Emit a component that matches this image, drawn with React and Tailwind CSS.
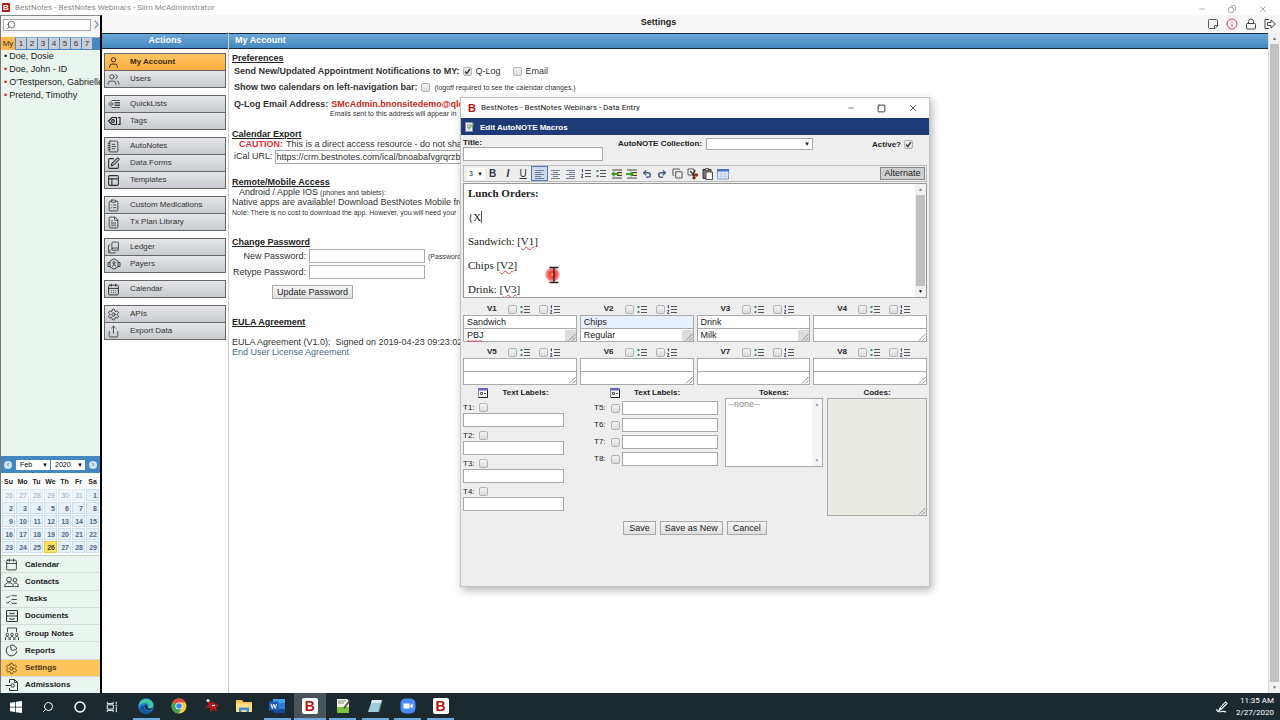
import React from 'react';
import {
  User, Users, Calendar, CalendarDays, Settings, ChartPie, Share, ClipboardList, FileText,
  SquarePen, PanelsTopLeft, NotebookText, BookCopy, ListChecks,
  StickyNote, CircleAlert, Lock, Search, Circle, Minus, Square, Copy, X, Undo2, Redo2,
} from 'lucide-react';

/* ---------- small drawings ---------- */

function BrandIcon({ className }) {
  return (
    <span className={'flex shrink-0 items-center justify-center font-["Liberation_Sans",sans-serif] font-bold ' + className}>B</span>
  );
}

function QuickTagIcon() {
  return (
    <svg viewBox="0 0 14 12" className="h-3 w-3.5" fill="none" stroke="#444" strokeWidth="0.9">
      <path d="M13 2.5H5L1.5 6 5 9.5h8M7.5 4.5H13M7.5 6H13M7.5 7.5H13" />
      <circle cx="5" cy="6" r="1" />
    </svg>
  );
}

function TagIcon() {
  return (
    <svg viewBox="0 0 14 12" className="h-3 w-3.5" fill="none" stroke="#222" strokeWidth="1.1">
      <path d="M9.5 2.5H5L1.5 6 5 9.5h4.5zM11 2.5h2v7h-2" />
      <circle cx="6" cy="6" r="1.4" />
    </svg>
  );
}

function PayerIcon() {
  return (
    <svg viewBox="0 0 14 12" className="h-3 w-3.5" fill="none" stroke="#333" strokeWidth="0.9">
      <path d="M7 .8 11 3v6l-4 2.200L3 9V3zM3 4.500H1v4h2M11 4.500h2v4h-2M5.500 8.500c0-2.400 3-2.400 3 0" />
      <circle cx="7" cy="4.800" r="1.200" />
    </svg>
  );
}

function ContactsIcon() {
  return (
    <svg viewBox="0 0 15 12" className="h-3 w-[15px]" fill="none" stroke="#333" strokeWidth="0.9">
      <circle cx="5" cy="3.500" r="2.300" />
      <circle cx="11" cy="4" r="1.900" />
      <path d="M.5 10.500c0-5 9-5 9 0zM10.500 10.500h4c0-3-2.500-4-4.800-3" />
    </svg>
  );
}

function DocumentsIcon() {
  return (
    <svg viewBox="0 0 14 14" className="h-3.5 w-3.5" fill="none" stroke="#333" strokeWidth="1">
      <path d="M1.500 1.500h11v11h-11zM1.500 7h11M5 3.500v1.200h4V3.500M5 9v1.200h4V9" />
    </svg>
  );
}

function AdmissionsIcon() {
  return (
    <svg viewBox="0 0 14 14" className="h-3.5 w-3.5" fill="none" stroke="#333" strokeWidth="1">
      <path d="M4.500 5V1.500h5l3 3v8h-8V10M9.500 1.500v3h3M.5 7.500H6M6 7.500a1.700 1.700 0 1 0 3.400 0 1.700 1.700 0 1 0-3.400 0" />
    </svg>
  );
}

function GroupIcon() {
  return (
    <svg viewBox="0 0 14 14" className="h-3.5 w-3.5" fill="none" stroke="#333" strokeWidth="0.9">
      <path d="M2.500 5V1h9v4M.5 13v-2c0-2 3.600-2 3.600 0v2M5.200 13v-2c0-2 3.600-2 3.600 0v2M9.900 13v-2c0-2 3.600-2 3.600 0v2" />
      <circle cx="2.300" cy="7.500" r="1.300" />
      <circle cx="7" cy="7.500" r="1.300" />
      <circle cx="11.700" cy="7.500" r="1.300" />
    </svg>
  );
}

function ListIcon({ numbered }) {
  return (
    <svg viewBox="0 0 10 9" className="h-[9px] w-2.5" fill="none" stroke="#555" strokeWidth="1">
      <path d="M4 1.500h6M4 4.500h6M4 7.500h6" strokeWidth="1.200" />
      {numbered
        ? <path d="M.5 1.500 1.500.5v3M.3 5.500h1.500L.5 8.500h1.800" stroke="#2a3a7a" strokeWidth="0.900" />
        : <path d="M.5 2h2M.5 7h2" stroke="#3c8a5c" strokeWidth="1.900" />}
    </svg>
  );
}

function LabelIcon() {
  return (
    <svg viewBox="0 0 10 10" className="h-2.5 w-2.5">
      <rect x="0.500" y="0.500" width="9" height="9" fill="#f4f4f4" stroke="#888" />
      <rect x="0" y="0" width="10" height="2.500" fill="#6a68c0" />
      <path d="M9.500 2v7.500H1" fill="none" stroke="#222" />
      <path d="M2.500 4.500h2v2h-2zM6 5.500h2" fill="none" stroke="#445" strokeWidth="0.900" />
    </svg>
  );
}

function Grip() {
  return (
    <svg viewBox="0 0 8 8" className="h-2 w-2" fill="none" stroke="#888" strokeWidth="0.900">
      <path d="M1 7.500 7.500 1M4.500 7.500l3-3" />
    </svg>
  );
}

function AlignIcon({ kind }) {
  const d = {
    left: 'M1 2.500h9M1 4.500h6M1 6.500h9M1 8.500h6M1 10.500h9',
    center: 'M1 2.500h9M3 4.500h5M1 6.500h9M3 8.500h5M1 10.500h9',
    right: 'M1 2.500h9M4 4.500h6M1 6.500h9M4 8.500h6M1 10.500h9',
  }[kind];
  return (
    <svg viewBox="0 0 11 12" className="h-3 w-[11px]" fill="none" stroke="#6a7486" strokeWidth="0.9"><path d={d} /></svg>
  );
}

function IndentIcon({ out }) {
  return (
    <svg viewBox="0 0 12 12" className="h-3 w-3" fill="none">
      <path d="M1 2h10M6 4.500h5M6 7.500h5M1 10h10" stroke="#444" strokeWidth="1" />
      <path d={out ? 'M0 6l3.500-3v2H8v2H3.500v2z' : 'M8 6 4.500 3v2H0v2h4.500v2z'} fill="#35a02c" />
      <path d="M7 6h4" stroke="#e7c33a" strokeWidth="1.200" />
    </svg>
  );
}

/* ---------- form parts ---------- */

function Check({ label, checked }) {
  return (
    <span className="relative flex h-[9px] w-[9px] shrink-0">
      <input
        type="checkbox"
        aria-label={label}
        defaultChecked={checked}
        className="h-[9px] w-[9px] appearance-none rounded-[2px] border border-[#b4b4b4] bg-linear-to-b from-[#f2f2f2] to-[#dcdcdc]"
      />
      {checked && (
        <svg viewBox="0 0 9 9" className="pointer-events-none absolute inset-0 h-[9px] w-[9px]" fill="none" stroke="#444" strokeWidth="1.500">
          <path d="M2 4.500 3.800 6.500 7 2" />
        </svg>
      )}
    </span>
  );
}

const fieldClass = 'border border-[#a9a9a9] px-[3px] text-[9px] leading-none outline-none';
const buttonClass = 'h-3.5 border border-[#a8a8a8] bg-linear-to-b from-[#f6f6f6] to-[#dfdfdf] text-[9px] leading-none text-[#222]';

/* ---------- left sidebar ---------- */

const clients = [
  ['Doe, Dosie', 'text-[#222]'],
  ['Doe, John - ID', 'text-[#d22]'],
  ["O'Testperson, Gabrielle", 'text-[#d22]'],
  ['Pretend, Timothy', 'text-[#d22]'],
];

const weeks = [
  [26, 27, 28, 29, 30, 31, 1],
  [2, 3, 4, 5, 6, 7, 8],
  [9, 10, 11, 12, 13, 14, 15],
  [16, 17, 18, 19, 20, 21, 22],
  [23, 24, 25, 26, 27, 28, 29],
];

const navIcon = 'h-[13px] w-[13px]';
const navItems = [
  ['Calendar', <Calendar className={navIcon} strokeWidth={1.5} />],
  ['Contacts', <ContactsIcon />],
  ['Tasks', <ListChecks className={navIcon} strokeWidth={1.5} />],
  ['Documents', <DocumentsIcon />],
  ['Group Notes', <GroupIcon />],
  ['Reports', <ChartPie className={navIcon + ' -rotate-12'} strokeWidth={1.5} />],
  ['Settings', <Settings className={navIcon} strokeWidth={1.5} />],
  ['Admissions', <AdmissionsIcon />],
];

function MiniSelect({ label, value, className }) {
  return (
    <span className={'relative flex ' + className}>
      <select aria-label={label} className="h-2.5 w-full appearance-none bg-white pl-1 text-[7px] leading-none">
        <option>{value}</option>
      </select>
      <span className="pointer-events-none absolute top-0 right-0.5 text-[6px] leading-[10px]">▼</span>
    </span>
  );
}

function MiniCalendar() {
  return (
    <section aria-label="Calendar" className="bg-white pb-px">
      <div className="flex h-[17px] items-center justify-between bg-[#4388c0] px-[3px]">
        <button aria-label="Previous month" className="flex h-2 w-2 items-center justify-center rounded-full bg-[#cfe3f5] text-[7px] leading-none text-[#2d6ea8]">‹</button>
        <div className="flex gap-px">
          <MiniSelect label="Month" value="Feb" className="w-[34px]" />
          <MiniSelect label="Year" value="2020" className="w-[34px]" />
        </div>
        <button aria-label="Next month" className="flex h-2 w-2 items-center justify-center rounded-full bg-[#cfe3f5] text-[7px] leading-none text-[#2d6ea8]">›</button>
      </div>
      <table className="w-full table-fixed border-separate border-spacing-px text-[7px] font-bold">
        <thead>
          <tr>
            {['Su', 'Mo', 'Tu', 'We', 'Th', 'Fr', 'Sa'].map((d) => (
              <th key={d} className="h-3.5 p-0 text-center leading-none text-[#222]">{d}</th>
            ))}
          </tr>
        </thead>
        <tbody>
          {weeks.map((week, w) => (
            <tr key={w}>
              {week.map((day, i) => {
                const tone = w === 0 && day > 1
                  ? 'bg-[#f0f6fc] text-[#9aacc0] font-normal border-[#e3edf7]'
                  : w === 4 && day === 26
                    ? 'bg-[#ffe45c] text-[#363636] border-[#e8c840]'
                    : 'bg-[#e6f1fa] text-[#4c6a8c] border-[#cbdff0]';
                return (
                  <td key={i} className={'h-3 border p-0 pr-px text-right leading-none ' + tone}>{day}</td>
                );
              })}
            </tr>
          ))}
        </tbody>
      </table>
    </section>
  );
}

function Sidebar() {
  return (
    <aside className="flex w-[102px] shrink-0 flex-col overflow-hidden border-t border-r-2 border-l border-t-[#888] border-r-black border-l-[#777] bg-[#e9f5ee]">
      <div className="flex h-[17px] items-center gap-0.5 bg-[#f4f4f4] pl-0.5">
        <label className="flex h-3 min-w-0 flex-1 items-center border border-[#a9a9a9] bg-white px-0.5">
          <Search className="h-2.5 w-2.5 shrink-0 -scale-x-100 text-[#444]" strokeWidth={1.8} />
          <input aria-label="Search" className="w-full min-w-0 text-[9px] leading-none outline-none" />
        </label>
        <button aria-label="Go" className="flex w-[7px] justify-center">
          <svg viewBox="0 0 5 9" className="h-[9px] w-[5px]" fill="none" stroke="#7d9ccb" strokeWidth="1.400"><path d="m.8.800 3.200 3.700L.8 8.200" /></svg>
        </button>
      </div>
      <div className="flex h-[17px] items-end gap-px bg-linear-to-b from-white from-20% to-[#4388c0] to-30%">
        <button className="h-[13px] w-3.5 bg-[#fcb84e] text-[8px] leading-none text-[#333]">My</button>
        {[1, 2, 3, 4, 5, 6, 7].map((n) => (
          <button key={n} className="mb-px h-[11px] w-2.5 bg-[#c9ced6] text-[8px] leading-none text-[#333]">{n}</button>
        ))}
      </div>
      <ul className="flex-1 text-[9px] text-[#222]">
        {clients.map(([name, dot]) => (
          <li key={name} className="flex h-[13px] items-center gap-0.5 pl-[3px] leading-[13px] whitespace-nowrap">
            <span className={'leading-[13px] ' + dot}>•</span>
            <a href="#client">{name}</a>
          </li>
        ))}
      </ul>
      <MiniCalendar />
      <nav className="flex h-[138px] flex-col divide-y divide-[#d5dfd9] border-t border-[#c5cec8]">
        {navItems.map(([name, icon]) => (
          <a
            key={name}
            href="#nav"
            className={'flex flex-1 items-center gap-1.5 overflow-hidden pt-px pl-[3px] text-[8px] leading-none font-bold ' + (name === 'Settings' ? 'bg-[#fec55f] text-[#4a3208]' : 'text-[#222]')}
          >
            <span className="flex w-[15px] justify-center">{icon}</span>{name}
          </a>
        ))}
      </nav>
    </aside>
  );
}

/* ---------- actions ---------- */

const actIcon = 'h-[13px] w-[13px]';
const actionGroups = [
  [['My Account', <User className={actIcon} strokeWidth={1.800} />], ['Users', <Users className={actIcon} strokeWidth={1.500} />]],
  [['QuickLists', <QuickTagIcon />], ['Tags', <TagIcon />]],
  [['AutoNotes', <NotebookText className={actIcon} strokeWidth={1.500} />], ['Data Forms', <SquarePen className={actIcon} strokeWidth={2} />], ['Templates', <PanelsTopLeft className={actIcon} strokeWidth={2} />]],
  [['Custom Medications', <ClipboardList className={actIcon} strokeWidth={1.500} />], ['Tx Plan Library', <FileText className={actIcon} strokeWidth={1.500} />]],
  [['Ledger', <BookCopy className={actIcon} strokeWidth={1.500} />], ['Payers', <PayerIcon />]],
  [['Calendar', <CalendarDays className={actIcon} strokeWidth={1.800} />]],
  [['APIs', <Settings className={actIcon} strokeWidth={1.800} />], ['Export Data', <Share className={actIcon} strokeWidth={1.500} />]],
];

const barClass = 'flex h-4 shrink-0 items-center border-y border-[#1a2a3a] bg-linear-to-b from-[#69a7d6] to-[#4388c0] text-[9px] font-bold text-white';

function Actions() {
  return (
    <section className="flex w-[127px] shrink-0 flex-col border-r border-[#ccc] bg-white">
      <h2 className={barClass + ' justify-center'}>Actions</h2>
      <nav className="mt-1 flex flex-col gap-[7px] px-0.5">
        {actionGroups.map((group, g) => (
          <div key={g} className="flex flex-col gap-px border border-[#666] bg-[#666]">
            {group.map(([name, icon]) => (
              <a
                key={name}
                href="#action"
                className={'flex h-4 items-center text-[8px] leading-none ' + (name === 'My Account'
                  ? 'bg-linear-to-b from-[#ffc562] to-[#fbae3c] font-bold text-[#3a2808]'
                  : 'bg-linear-to-b from-[#e4e6e8] to-[#c8cbcf] text-[#333]')}
              >
                <span className="flex w-[25px] items-center pl-0.5">{icon}</span>{name}
              </a>
            ))}
          </div>
        ))}
      </nav>
    </section>
  );
}

/* ---------- account page ---------- */

function Heading({ children, className = '' }) {
  return <h3 className={'flex h-3 items-center font-bold text-[#222] underline ' + className}>{children}</h3>;
}

function Account() {
  return (
    <main className="flex min-w-0 flex-1 flex-col overflow-hidden bg-white">
      <h2 className={barClass + ' pl-1.5'}>My Account</h2>
      <div className="mt-[3px] flex flex-col pl-[3px] text-[9px] leading-none whitespace-nowrap text-[#333]">
        <Heading>Preferences</Heading>
        <div className="flex h-3.5 items-center pl-0.5">
          <b>Send New/Updated Appointment Notifications to MY:</b>
          <label className="ml-[3px] flex items-center gap-1"><Check label="Q-Log" checked />Q-Log</label>
          <label className="ml-3 flex items-center gap-1"><Check label="Email" />Email</label>
        </div>
        <div className="mt-px flex h-4 items-center pl-0.5">
          <b>Show two calendars on left-navigation bar:</b>
          <span className="ml-[3px] flex"><Check label="Show two calendars" /></span>
          <span className="ml-[5px] text-[7px]">(logoff required to see the calendar changes.)</span>
        </div>
        <div className="mt-1 flex h-2.5 items-center gap-[3px] pl-0.5">
          <b>Q-Log Email Address:</b><b className="text-[#c92a20]">SMcAdmin.bnonsitedemo@qlog</b>
        </div>
        <p className="flex h-2 items-center pl-[98px] text-[7px]">Emails sent to this address will appear in</p>
        <Heading className="mt-[11px]">Calendar Export</Heading>
        <p className="flex h-2 items-center gap-[3px] pl-[7px]"><b className="text-[#d33]">CAUTION:</b>This is a direct access resource - do not share</p>
        <label className="flex h-4 items-center gap-0.5 pl-0.5">
          iCal URL:
          <input readOnly defaultValue="https://crm.bestnotes.com/ical/bnoabafvgrqrzbn" className={fieldClass + ' mt-0.5 h-3.5 w-[210px] bg-white px-px'} />
        </label>
        <Heading className="mt-3">Remote/Mobile Access</Heading>
        <p className="flex h-2 items-center gap-0.5 pl-[7px]">Android / Apple IOS <span className="text-[7px]">(phones and tablets):</span></p>
        <p className="flex h-3 items-center">Native apps are available! Download BestNotes Mobile from</p>
        <p className="flex h-2 items-center text-[7px]">Note: There is no cost to download the app. However, you will need your</p>
        <Heading className="mt-5">Change Password</Heading>
        <div className="flex h-4 items-center gap-[3px]">
          <label htmlFor="new-pw" className="w-[74px] text-right">New Password:</label>
          <input id="new-pw" type="password" className={fieldClass + ' h-3.5 w-[116px] bg-white'} />
          <span className="text-[7px]">(Password</span>
        </div>
        <div className="flex h-4 items-center gap-[3px]">
          <label htmlFor="re-pw" className="w-[74px] text-right">Retype Password:</label>
          <input id="re-pw" type="password" className={fieldClass + ' h-3.5 w-[116px] bg-white'} />
        </div>
        <button className={buttonClass + ' mt-[5px] ml-10 w-[81px]'}>Update Password</button>
        <Heading className="mt-[17px]">EULA Agreement</Heading>
        <p className="mt-[9px] flex h-2.5 items-center gap-[5px]"><span>EULA Agreement (V1.0):</span><span>Signed on 2019-04-23 09:23:02</span></p>
        <a href="#eula" className="flex h-2.5 items-center text-[#4d6b86]">End User License Agreement</a>
      </div>
    </main>
  );
}

/* ---------- data entry window ---------- */

const toolIcons = [
  ['Bold', <b className="text-[10px] text-[#334]">B</b>],
  ['Italic', <i className="text-[10px] font-bold text-[#334]">I</i>],
  ['Underline', <u className="text-[10px] text-[#334]">U</u>],
  ['Align left', <AlignIcon kind="left" />],
  ['Align center', <AlignIcon kind="center" />],
  ['Align right', <AlignIcon kind="right" />],
  ['Numbered list', <ListIcon numbered />],
  ['Bulleted list', <ListIcon />],
  ['Outdent', <IndentIcon out />],
  ['Indent', <IndentIcon />],
  ['Undo', <Undo2 className="h-2.5 w-2.5 text-[#4a5c8c]" strokeWidth={3.5} />],
  ['Redo', <Redo2 className="h-2.5 w-2.5 text-[#4a5c8c]" strokeWidth={3.5} />],
  ['Copy', <Copy className="h-[11px] w-[11px] text-[#555]" strokeWidth={2.2} />],
  ['Cut', (
    <svg viewBox="0 0 12 12" className="h-3 w-3" fill="none">
      <path d="M1 1h6v6H1z" fill="#fff" stroke="#555" />
      <path d="m3 3 5 5M8 2 6 8" stroke="#333" strokeWidth="1.300" />
      <circle cx="9.500" cy="7" r="1.800" fill="#a33527" />
      <circle cx="7" cy="9.800" r="1.700" fill="#7d2218" />
    </svg>
  )],
  ['Paste', (
    <svg viewBox="0 0 12 12" className="h-3 w-3">
      <path d="M1 1.500h8v9H1z" fill="#777" stroke="#333" />
      <path d="M4 4h6.500v7.500H4z" fill="#fff" stroke="#555" />
      <path d="M3.500.500h3v2h-3z" fill="#ddd" stroke="#222" strokeWidth="0.700" />
    </svg>
  )],
  ['Table', (
    <svg viewBox="0 0 12 12" className="h-3 w-3">
      <path d="M.5 1.500h11v9.500H.5z" fill="#eaf1fd" stroke="#7a96cc" />
      <path d="M0 1h12v2.500H0z" fill="#3f6fc4" />
      <path d="M4.200 3.500v7M8 3.500v7M.5 6h11M.5 8.300h11" stroke="#a9bee4" strokeWidth="0.700" />
    </svg>
  )],
];

const variables = [
  ['V1', 'Sandwich', 'PBJ'], ['V2', 'Chips', 'Regular'], ['V3', 'Drink', 'Milk'], ['V4', '', ''],
  ['V5', '', ''], ['V6', '', ''], ['V7', '', ''], ['V8', '', ''],
];

function Variable({ name, title, value }) {
  return (
    <div>
      <div className="flex h-3 items-center pl-6 text-[8px] font-bold">
        <span className="w-[21px]">{name}</span>
        <Check label={name + ' bulleted'} />
        <span className="ml-[3px]"><ListIcon /></span>
        <span className="ml-[9px] flex"><Check label={name + ' numbered'} /></span>
        <span className="ml-0.5"><ListIcon numbered /></span>
      </div>
      <input aria-label={name + ' title'} defaultValue={title} className={fieldClass + ' block h-3.5 w-full ' + (name === 'V2' ? 'bg-[#e8f0fe]' : 'bg-white')} />
      <div className="relative">
        <textarea aria-label={name + ' value'} defaultValue={value} spellCheck={false} className={fieldClass + ' block h-[13px] w-full resize-none overflow-hidden border-t-0 bg-white py-0.5'} />
        {value === 'PBJ' && (
          <svg viewBox="0 0 16 2" className="pointer-events-none absolute bottom-0 left-1 h-0.5 w-4" fill="none" stroke="#d33" strokeWidth="0.800">
            <path d="m0 1.500 1-1 2 1 2-1 2 1 2-1 2 1 2-1 2 1 1-1" />
          </svg>
        )}
        <span className={'pointer-events-none absolute right-px bottom-px flex h-[11px] w-[11px] items-end justify-end ' + (value ? 'bg-[#dcdcdc]' : '')}><Grip /></span>
      </div>
    </div>
  );
}

function Caption({ children, icon, className = 'justify-center' }) {
  return (
    <div className={'flex h-2.5 items-center text-[8px] leading-none font-bold ' + className}>
      {icon}{children}
    </div>
  );
}

function Misspelt({ children }) {
  return <span className="underline decoration-[#d44] decoration-wavy decoration-[0.5px]">{children}</span>;
}

function DataEntry() {
  return (
    <section aria-label="Data Entry" className="absolute top-[97px] left-[460px] flex h-[490px] w-[470px] flex-col border border-[#c4c4c4] bg-[#eee] text-[#222] shadow-[2px_3px_8px_rgba(0,0,0,0.3)]">
      <header className="flex h-5 shrink-0 items-center bg-white pl-[7px]">
        <BrandIcon className="h-2.5 w-2 text-[11px] text-[#b5150f]" />
        <span className="ml-[5px] flex-1 font-[Roboto,sans-serif] text-[8px] leading-none">BestNotes - BestNotes Webinars - Data Entry</span>
        <div className="flex items-center gap-[22px] pr-[11px] text-[#333]">
          <button aria-label="Minimize"><Minus className="h-2 w-2" strokeWidth={2} /></button>
          <button aria-label="Maximize"><Square className="h-[9px] w-[9px]" strokeWidth={2.5} /></button>
          <button aria-label="Close"><X className="h-2.5 w-2.5" strokeWidth={2} /></button>
        </div>
      </header>
      <h2 className="flex h-[17px] shrink-0 items-center gap-[5px] bg-[#1f3b77] pt-0.5 pl-1 text-[8px] font-bold text-white">
        <svg viewBox="0 0 10 10" className="mb-0.5 h-2.5 w-2.5">
          <path d="M.5.500h7v9h-7z" fill="#eef" stroke="#88a" />
          <path d="M2 3h4M2 5h3" stroke="#669" strokeWidth="0.800" />
          <path d="m3.500 7.500 5-6" stroke="#7ac14b" strokeWidth="1.600" />
        </svg>
        Edit AutoNOTE Macros
      </h2>
      <form className="flex flex-col px-0.5 pt-[3px]" onSubmit={(e) => e.preventDefault()}>
        <div className="flex h-[23px] items-start text-[8px] leading-none font-bold">
          <div className="flex w-[140px] flex-col">
            <label htmlFor="macro-title" className="leading-[9px]">Title:</label>
            <input id="macro-title" className={fieldClass + ' h-3.5 w-full bg-white'} />
          </div>
          <label className="ml-[15px] flex items-center gap-1">
            AutoNOTE Collection:
            <span className="relative flex">
              <select className="h-3 w-[107px] appearance-none border border-[#a9a9a9] bg-white"><option> </option></select>
              <span className="pointer-events-none absolute top-[3px] right-[3px] text-[6px] leading-none">▼</span>
            </span>
          </label>
          <label className="mt-0.5 mr-3.5 ml-auto flex items-center gap-[3px]">Active?<Check label="Active?" checked /></label>
        </div>

        <div className="mt-1 flex h-[17px] items-center border border-[#bbb] pr-px pl-[3px]">
          <span className="relative flex w-[18px]">
            <select aria-label="Font size" className="h-3 w-full appearance-none bg-white pl-0.5 text-[7px] leading-none"><option>3</option></select>
            <span className="pointer-events-none absolute top-[3px] right-0.5 text-[6px] leading-none">▼</span>
          </span>
          <div className="flex w-[246px]">
            {toolIcons.map(([name, icon]) => (
              <button
                key={name}
                type="button"
                aria-label={name}
                className={'flex h-[15px] flex-1 items-center justify-center leading-none ' + (name === 'Align left' ? 'border border-[#5a78ae] bg-[#ccd9ee]' : '')}
              >
                {icon}
              </button>
            ))}
          </div>
          <button type="button" className="ml-auto h-[13px] w-[45px] border border-[#888] bg-[#cfcfcf] text-[9px] leading-none">Alternate</button>
        </div>

        <div className="mt-px flex h-[115px] border border-[#999] bg-white">
          <div
            role="textbox"
            aria-label="Macro text"
            contentEditable
            suppressContentEditableWarning
            spellCheck={false}
            className="h-full flex-1 overflow-hidden pt-[3px] pl-1 font-['Liberation_Serif',serif] text-[11px] leading-3 outline-none"
          >
            <p className="mb-3 font-bold">Lunch Orders:</p>
            <p className="mb-3"><span className="border-r border-[#555]">{'{X'}</span></p>
            <p className="mb-3">Sandwich: [<Misspelt>V1</Misspelt>]</p>
            <p className="mb-3">Chips [<Misspelt>V2</Misspelt>]</p>
            <p>Drink: [<Misspelt>V3</Misspelt>]</p>
          </div>
          <div className="flex w-[11px] flex-col items-center justify-between bg-[#f1f1f1] text-[5px] leading-[11px] text-[#888]">
            <span>▲</span><span className="w-[9px] flex-1 bg-[#c1c1c1]" /><span className="text-black">▼</span>
          </div>
        </div>

        <div className="mt-[5px] grid grid-cols-4 gap-x-[3px] gap-y-1">
          {variables.map(([name, title, value]) => <Variable key={name} name={name} title={title} value={value} />)}
        </div>

        <div className="mt-[3px] flex items-start text-[8px] leading-none">
          <div className="w-[101px]">
            <Caption icon={<span className="mr-3.5"><LabelIcon /></span>}>Text Labels:</Caption>
            <div className="mt-1 flex flex-col gap-[3px]">
              {['T1', 'T2', 'T3', 'T4'].map((t) => (
                <div key={t}>
                  <div className="flex h-[11px] items-center"><label htmlFor={t} className="w-4">{t}:</label><Check label={t + ' enabled'} /></div>
                  <input id={t} className={fieldClass + ' block h-3.5 w-full bg-white'} />
                </div>
              ))}
            </div>
          </div>
          <div className="ml-[30px] w-[124px]">
            <Caption className="pl-4" icon={<span className="mr-3.5"><LabelIcon /></span>}>Text Labels:</Caption>
            <div className="mt-[3px] flex flex-col gap-[3px]">
              {['T5', 'T6', 'T7', 'T8'].map((t) => (
                <div key={t} className="flex items-center">
                  <label htmlFor={t} className="w-[17px]">{t}:</label>
                  <Check label={t + ' enabled'} />
                  <input id={t} className={fieldClass + ' ml-0.5 h-3.5 min-w-0 flex-1 bg-white'} />
                </div>
              ))}
            </div>
          </div>
          <div className="ml-[7px] w-[98px]">
            <Caption>Tokens:</Caption>
            <div className="relative">
              <select aria-label="Tokens" multiple className="block h-[69px] w-full appearance-none overflow-hidden border border-[#a9a9a9] bg-white px-0.5 text-[9px] leading-none text-[#888]">
                <option className="p-0">--none--</option>
              </select>
              <span className="pointer-events-none absolute inset-y-px right-px flex w-2.5 flex-col items-center justify-between bg-[#f6f6f6] text-[5px] leading-[11px] text-[#999]"><span>▲</span><span>▼</span></span>
            </div>
          </div>
          <div className="ml-1 flex-1">
            <Caption>Codes:</Caption>
            <div className="relative">
              <textarea aria-label="Codes" className="block h-[118px] w-full resize-none border border-[#a9a9a9] bg-[#eaeae4] outline-none" />
              <span className="pointer-events-none absolute right-px bottom-px"><Grip /></span>
            </div>
          </div>
        </div>

        <div className="mt-[5px] flex justify-center gap-1">
          <button className={buttonClass + ' px-[5px]'}>Save</button>
          <button className={buttonClass + ' px-1'}>Save as New</button>
          <button className={buttonClass + ' px-[5px]'}>Cancel</button>
        </div>
      </form>
    </section>
  );
}

/* ---------- taskbar ---------- */

const task = 'h-4 w-4';
const launchers = [
  ['Start', <svg viewBox="0 0 16 16" className="h-3 w-3" fill="#fff"><path d="M0 2.200 7 1.200v6.300H0zM8 1l8-1v7.500H8zM0 8.500h7v6.300l-7-1zM8 8.500h8V16l-8-1z" /></svg>],
  ['Search', <Search className="h-3 w-3 -scale-x-100 text-white" strokeWidth={2} />],
  ['Cortana', <Circle className="h-3 w-3 text-white" strokeWidth={3} />],
  ['Task View', <svg viewBox="0 0 14 14" className="h-3 w-3" fill="none" stroke="#fff" strokeWidth="1.100"><path d="M1.500 4.500h7v5h-7zM1.500 1v2h7V1M1.500 13v-2h7v2M12 1v3M12 7v6M10.800 5.500h2.400" /></svg>],
];

function TaskB() {
  return <BrandIcon className="h-4 w-4 rounded-[2px] bg-white text-[14px] text-[#b0140e]" />;
}

const apps = [
  ['Edge', true, (
    <svg viewBox="0 0 16 16" className={task}>
      <circle cx="8" cy="8" r="7.800" fill="#1b7fd0" />
      <path d="M1 6C3 0 12-1 15 5c1.500 4-2 6-5.500 5 2-2 1-5-2-5C4 5 1.500 6.500 1 8z" fill="#45c8a0" />
      <path d="M6 8c-1 3 2 6 7 5-3 3.500-9 3-11-1C2 9 3.500 7 6 8z" fill="#0e559e" />
      <path d="M7 7c2-1 3 1.500 2.500 3 1 1 4 1 5.500-.5-1 2-3 3-5 2.500C7 11.500 6 9 7 7z" fill="#1c2a33" />
    </svg>
  )],
  ['Chrome', false, (
    <svg viewBox="0 0 16 16" className={task}>
      <circle cx="8" cy="8" r="7.500" fill="#f7cc3c" />
      <path d="M8 8 1.500 4.200A7.500 7.500 0 0 1 14.500 4.500H8z" fill="#e04a3a" />
      <path d="M1.500 4.200A7.500 7.500 0 0 0 7.500 15.500L11 9.500 8 8z" fill="#38a352" />
      <circle cx="8" cy="8" r="3.600" fill="#fff" />
      <circle cx="8" cy="8" r="2.800" fill="#4283ec" />
    </svg>
  )],
  ['Utility', false, (
    <svg viewBox="0 0 16 16" className={task}>
      <path d="m3 2 3 2.500L10 4l1 2 4 1-3 2.500 1 4.500-3-2.500L6 14l.5-4L1 9l3.500-2z" fill="#b81a16" />
      <circle cx="4" cy="2.500" r="1.600" fill="#ddd" />
      <path d="M8 7.500h3" stroke="#fff" strokeWidth="1.300" />
    </svg>
  )],
  ['Explorer', false, (
    <svg viewBox="0 0 16 16" className={task}>
      <path d="M0 2h6l1.500 2H16v10H0z" fill="#f4c550" />
      <path d="M0 5.500h16V14H0z" fill="#ffdf85" />
      <path d="M3 14V9.500h10V14h-2.500v-2h-5v2z" fill="#3d8fdc" />
    </svg>
  )],
  ['Word', true, (
    <svg viewBox="0 0 16 16" className={task}>
      <path d="M4 1h12v14H4z" fill="#2b7cd3" />
      <path d="M4 1h12v4H4z" fill="#41a5ee" />
      <path d="M4 11h12v4H4z" fill="#174a96" />
      <path d="M0 3.500h9.500v9H0z" fill="#185abd" />
      <path d="m2 6 1.300 4.500L4.800 6l1.400 4.500L7.600 6" fill="none" stroke="#fff" />
    </svg>
  )],
  ['BestNotes', true, <TaskB />],
  ['Notepad++', true, (
    <svg viewBox="0 0 16 16" className={task}>
      <path d="M2 1h10l2 2v12H2z" fill="#f4f6ee" />
      <path d="M2 9h12v6H2z" fill="#7fc241" />
      <path d="M3 3h8M3 5h6" stroke="#7a8a6a" />
      <path d="m8 10 6-8 1.500 1-6 8z" fill="#4a5548" />
    </svg>
  )],
  ['Notepad', true, (
    <svg viewBox="0 0 16 16" className={task}>
      <path d="M5 2h10l-3.500 12H1z" fill="#9fcbdc" />
      <path d="M5 2h10l-1 3H4z" fill="#d8eaf0" />
      <path d="m15 2 .5 1L12.500 14h-1z" fill="#55788a" />
    </svg>
  )],
  ['Zoom', true, (
    <svg viewBox="0 0 16 16" className={task}>
      <rect x="0.500" y="0.500" width="15" height="15" rx="5" fill="#4a8cff" />
      <path d="M3.500 5.500h6v5h-6zM10.200 7.200l2.500-1.700v5l-2.500-1.700z" fill="#fff" />
    </svg>
  )],
  ['BestNotes data entry', true, <TaskB />],
];

function Taskbar() {
  return (
    <footer className="flex h-[27px] shrink-0 items-stretch bg-[#1c2a30]">
      {launchers.map(([name, icon]) => (
        <button key={name} aria-label={name} className="flex w-8 items-center justify-center">{icon}</button>
      ))}
      <div className="ml-0.5 flex w-[327px]">
        {apps.map(([name, open, icon]) => (
          <button key={name} aria-label={name} className={'flex flex-1 flex-col items-center justify-between pt-[5px] ' + (name === 'BestNotes' ? 'bg-[#46535a]' : '')}>
            {icon}
            <span className={'h-0.5 ' + (name === 'BestNotes' ? 'w-full ' : 'w-[27px] ') + (open ? 'bg-[#6aa9e0]' : '')} />
          </button>
        ))}
      </div>
      <div className="ml-auto flex items-center gap-2 pr-1.5 text-white">
        <svg viewBox="0 0 12 12" className="h-3 w-3" fill="none" stroke="#fff" strokeWidth="1.100">
          <path d="m4 7 5.500-6L11 2.500 5.500 8zM4 7l-1 2.500L5.500 8M1 8c-1 3 3 3 5 2.500s3 0 4 .5" />
        </svg>
        <p className="text-right font-[Roboto,sans-serif] text-[8px] leading-3">11:35 AM<br />2/27/2020</p>
      </div>
    </footer>
  );
}

/* ---------- page ---------- */

export default function App() {
  return (
    <div className="relative flex min-h-screen flex-col bg-white font-['Liberation_Sans',Arial,sans-serif]">
      <header className="flex h-[15px] shrink-0 items-center bg-white pl-0.5">
        <BrandIcon className="h-[9px] w-2 rounded-[1px] bg-[#b5150f] text-[8px] leading-none text-white" />
        <span className="ml-[5px] flex-1 font-[Roboto,sans-serif] text-[8px] leading-none text-[#8a8a8a]">BestNotes - BestNotes Webinars - Slim McAdministrator</span>
        <div className="flex items-center gap-[22px] pt-0.5 pr-3 text-[#888]">
          <button aria-label="Minimize window"><Minus className="h-2 w-2" strokeWidth={2} /></button>
          <button aria-label="Restore window"><Copy className="h-2 w-2 -scale-x-100" strokeWidth={2.2} /></button>
          <button aria-label="Close window"><X className="h-2.5 w-2.5" strokeWidth={1.800} /></button>
        </div>
      </header>
      <div className="flex flex-1">
        <Sidebar />
        <div className="flex min-w-0 flex-1 flex-col">
          <div className="flex h-[18px] shrink-0 items-center bg-[#f7f7f7]">
            <h1 className="flex-1 pb-1 pl-2 text-center text-[9px] leading-none font-bold text-[#222]">Settings</h1>
            <div className="flex gap-[7px] pr-1 text-[#444]">
              <a href="#note" aria-label="Notes"><StickyNote className="h-3 w-3 -scale-y-100" strokeWidth={1.800} /></a>
              <a href="#alert" aria-label="Alerts"><CircleAlert className="h-3 w-3 rotate-180 text-[#d8262b]" strokeWidth={1.800} /></a>
              <a href="#lock" aria-label="Lock"><Lock className="h-3 w-3" strokeWidth={2} /></a>
              <a href="#exit" aria-label="Log out">
                <svg viewBox="0 0 12 12" className="h-3 w-3" fill="none" stroke="currentColor" strokeWidth="1"><path d="M5 1.500H1v9h4M3.500 4.500h3.500V2l4.500 4L7 10V7.500H3.500z" /></svg>
              </a>
            </div>
          </div>
          <div className="flex flex-1">
            <Actions />
            <Account />
            <div className="flex w-3 flex-col items-center border-l border-[#ddd] bg-[#f1f1f1] text-[5px] leading-[11px] text-[#777]">
              <span>▲</span><span className="w-[9px] flex-1 bg-[#c1c1c1]" /><span>▼</span>
            </div>
          </div>
        </div>
      </div>
      <Taskbar />
      <DataEntry />
      <svg viewBox="0 0 20 20" className="pointer-events-none absolute top-[264px] left-[543px] h-5 w-5">
        <defs>
          <radialGradient id="press">
            <stop offset="0" stopColor="#ffb070" />
            <stop offset="0.300" stopColor="#f03a34" />
            <stop offset="0.700" stopColor="#f03a34" stopOpacity="0.700" />
            <stop offset="1" stopColor="#f03a34" stopOpacity="0" />
          </radialGradient>
        </defs>
        <circle cx="9.500" cy="10.500" r="8" fill="url(#press)" />
        <path d="M6.500 3.500h9M6.500 18.500h9M11 3.500v15" fill="none" stroke="#222" strokeWidth="1.300" />
      </svg>
    </div>
  );
}
